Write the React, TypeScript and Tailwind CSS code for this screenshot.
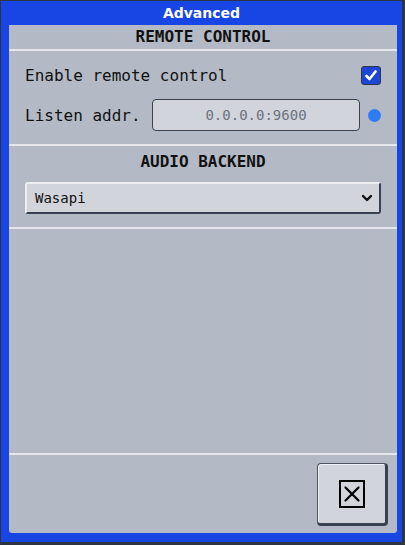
import React from "react";

export default function App() {
  const mono = { fontFamily: '"DejaVu Sans Mono", "Liberation Mono", monospace' };
  return (
    <div className="w-[405px] h-[545px] border-t border-l border-r-[3px] border-b-[3px] border-[#2e3440] bg-[#1846e5] flex flex-col">
      <div
        className="h-[24px] flex items-center justify-center text-white font-bold text-[14px] pt-[1px]"
        style={{ fontFamily: '"DejaVu Sans", sans-serif' }}
      >
        Advanced
      </div>
      <div
        className="ml-[8px] mr-[5px] h-[508px] bg-[#b4bac5] rounded-b-[3px] flex flex-col text-[#111111]"
        style={mono}
      >
        <div className="h-[24px] shrink-0 flex items-center justify-center font-bold text-[16px]">REMOTE CONTROL</div>
        <div className="h-[2px] shrink-0 bg-[#e5e7eb]" />
        <div className="pt-[14px] pb-[13px] px-[16px] flex flex-col gap-[14px] shrink-0">
          <div className="h-[20px] flex items-center justify-between text-[16px]">
            <span className="pt-[1px]">Enable remote control</span>
            <div className="w-[20px] h-[19px] rounded-[3px] bg-[#1d46d6] border border-[#2d3748] flex items-center justify-center">
              <svg width="12" height="11" viewBox="0 0 12 11">
                <path d="M1.5 6 L4.5 9 L10.5 1.5" fill="none" stroke="white" strokeWidth="2.6" strokeLinecap="round" strokeLinejoin="round" />
              </svg>
            </div>
          </div>
          <div className="h-[32px] flex items-center text-[16px]">
            <span className="w-[127px] shrink-0 pt-[1px]">Listen addr.</span>
            <div className="flex-1 h-[32px] rounded-[4px] border border-[#374151] bg-[#d1d5db] flex items-center justify-center text-[14px] text-[#6b7280]">
              0.0.0.0:9600
            </div>
            <div className="ml-[8px] w-[13px] h-[13px] rounded-full bg-[#2f7cf6]" />
          </div>
        </div>
        <div className="h-[2px] shrink-0 bg-[#e5e7eb]" />
        <div className="pt-[6px] pb-[13px] px-[16px] flex flex-col gap-[10px] shrink-0">
          <div className="h-[20px] flex items-center justify-center font-bold text-[16px]">AUDIO BACKEND</div>
          <div className="h-[32px] rounded-[3px] bg-[#d1d5db] border-t-2 border-l-2 border-[#eef0f3] border-r-2 border-b-2 border-r-[#374151] border-b-[#374151] flex items-center justify-between pl-[8px] pr-[6px] text-[14px]">
            <span>Wasapi</span>
            <svg width="12" height="8" viewBox="0 0 12 8">
              <path d="M2 2 L6 6 L10 2" fill="none" stroke="#111" strokeWidth="2.4" strokeLinecap="round" strokeLinejoin="round" />
            </svg>
          </div>
        </div>
        <div className="h-[2px] shrink-0 bg-[#e5e7eb]" />
        <div className="flex-1" />
        <div className="h-[2px] shrink-0 bg-[#e5e7eb]" />
        <div className="h-[78px] shrink-0 flex justify-end items-start pt-[8px] pr-[9px]">
          <div className="w-[71px] h-[63px] rounded-[4px] bg-[#d1d5db] border-t border-l border-[#4b5563] border-r-[3px] border-b-[3px] border-r-[#374151] border-b-[#374151] shadow-[inset_1px_1px_0_#eef0f3] flex items-center justify-center">
            <svg width="26" height="28" viewBox="0 0 26 28">
              <rect x="1" y="1" width="24" height="26" fill="none" stroke="#000" strokeWidth="2" />
              <path d="M6.5 7.5 L19.5 20.5 M19.5 7.5 L6.5 20.5" stroke="#000" strokeWidth="2.2" strokeLinecap="round" />
            </svg>
          </div>
        </div>
      </div>
    </div>
  );
}
